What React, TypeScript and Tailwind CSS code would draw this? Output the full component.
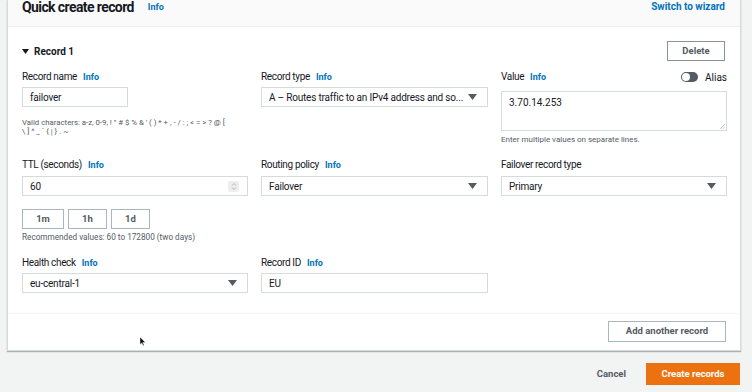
import React from "react";

const blue = "text-[#0073bb]";

function Info() {
  return <span className={`ml-[6px] text-[9px] font-bold tracking-normal ${blue}`}>Info</span>;
}

function Label({ text, info = true }: { text: string; info?: boolean }) {
  return (
    <div className="flex h-[14px] items-center text-[10px] leading-[14px] tracking-[-0.35px] text-[#16191f]">
      {text}
      {info && <Info />}
    </div>
  );
}

function Caret() {
  return (
    <svg width="9" height="6" viewBox="0 0 9 6" className="shrink-0">
      <path d="M0 0h9L4.5 6z" fill="#545b64" />
    </svg>
  );
}

function Input({ value, select, spinner }: { value: string; select?: boolean; spinner?: boolean }) {
  return (
    <div className="flex h-[20px] items-center justify-between border border-[#d5dbdb] bg-white pl-[7px] pr-[10px] text-[10px] tracking-[-0.2px] text-[#16191f]">
      <span className="whitespace-nowrap">{value}</span>
      {select && <Caret />}
      {spinner && (
        <div className="-mr-[2px] flex h-[11px] w-[11px] flex-col items-center justify-center rounded-[2px] bg-[#eeeeee]">
          <svg width="6" height="9" viewBox="0 0 6 9">
            <path d="M1 3.5L3 1.5L5 3.5M1 5.5L3 7.5L5 5.5" stroke="#9aa0a6" strokeWidth="0.8" fill="none" />
          </svg>
        </div>
      )}
    </div>
  );
}

function SmallButton({ text }: { text: string }) {
  return (
    <div className="flex h-[20px] items-center justify-center border border-[#aab7b8] bg-white text-[9.5px] font-bold text-[#545b64]">
      {text}
    </div>
  );
}

export default function App() {
  return (
    <div className="relative h-[392px] w-[752px] overflow-hidden bg-[#f2f3f3] font-['Roboto',sans-serif] text-[#16191f]">
      <div className="ml-[7px] w-[734px] border-x border-b border-[#d5dbdb] bg-white shadow-[0_1px_1px_rgba(0,28,36,0.3)]">
        <div className="flex h-[27px] items-start justify-between border-b border-[#eaeded] bg-[#fafafa] pl-[14px] pr-[15px]">
          <div className="flex items-center leading-[15px]">
            <span className="text-[14px] font-bold tracking-[-0.6px]">Quick create record</span>
            <span className={`ml-[14px] text-[9px] font-bold ${blue}`}>Info</span>
          </div>
          <span className={`text-[10px] font-bold leading-[13px] ${blue}`}>Switch to wizard</span>
        </div>

        <div className="pl-[14px] pr-[15px] pt-[14px]">
          <div className="flex h-[20px] items-center justify-between">
            <div className="flex items-center gap-[5px] text-[10px] font-bold">
              <svg width="7" height="5" viewBox="0 0 7 5">
                <path d="M0 0h7L3.5 5z" fill="#16191f" />
              </svg>
              Record 1
            </div>
            <div className="flex h-[20px] w-[58px] items-center justify-center border border-[#879596] text-[9.5px] font-bold text-[#545b64]">
              Delete
            </div>
          </div>

          <div className="mt-[9px] grid h-[88px] grid-cols-[226px_227px_226px] gap-x-[13px]">
            <div>
              <Label text="Record name" />
              <div className="mt-[3px] w-[106px]">
                <Input value="failover" />
              </div>
              <p className="mt-[11px] whitespace-nowrap text-[7.8px] leading-[9px] text-[#545b64]">
                Valid characters: a-z, 0-9, ! " # $ % &amp; ' ( ) * + , - / : ; &lt; = &gt; ? @ [
                <br />
                \ ] ^ _ ` {"{"} | {"}"} . ~
              </p>
            </div>
            <div>
              <Label text="Record type" />
              <div className="mt-[3px]">
                <Input value="A – Routes traffic to an IPv4 address and so..." select />
              </div>
            </div>
            <div>
              <div className="flex h-[14px] items-center justify-between">
                <Label text="Value" />
                <div className="flex items-center gap-[7px] text-[10px]">
                  <div className="flex h-[10px] w-[17px] items-center rounded-full bg-[#545b64] pl-[1px]">
                    <div className="h-[8px] w-[8px] rounded-full bg-white" />
                  </div>
                  Alias
                </div>
              </div>
              <div className="relative mt-[7px] h-[40px] border border-[#d5dbdb] pl-[7px] pt-[3px] text-[10px]">
                3.70.14.253
                <svg width="5" height="5" viewBox="0 0 5 5" className="absolute bottom-[1px] right-[1px]">
                  <path d="M5 0L0 5M5 2.5L2.5 5" stroke="#aab7b8" strokeWidth="0.7" />
                </svg>
              </div>
              <p className="mt-[4px] text-[8px] leading-[10px] text-[#545b64]">Enter multiple values on separate lines.</p>
            </div>
          </div>

          <div className="grid h-[98px] grid-cols-[226px_227px_226px] gap-x-[13px]">
            <div>
              <Label text="TTL (seconds)" />
              <div className="mt-[4px]">
                <Input value="60" spinner />
              </div>
              <div className="mt-[13px] flex gap-[4px]">
                <div className="w-[42px]"><SmallButton text="1m" /></div>
                <div className="w-[39px]"><SmallButton text="1h" /></div>
                <div className="w-[39px]"><SmallButton text="1d" /></div>
              </div>
              <p className="mt-[3px] text-[8.2px] leading-[10px] text-[#545b64]">Recommended values: 60 to 172800 (two days)</p>
            </div>
            <div>
              <Label text="Routing policy" />
              <div className="mt-[4px]">
                <Input value="Failover" select />
              </div>
            </div>
            <div>
              <Label text="Failover record type" info={false} />
              <div className="mt-[4px]">
                <Input value="Primary" select />
              </div>
            </div>
          </div>

          <div className="grid grid-cols-[226px_227px_226px] gap-x-[13px] pb-[20px]">
            <div>
              <Label text="Health check" />
              <div className="mt-[3px]">
                <Input value="eu-central-1" select />
              </div>
            </div>
            <div>
              <Label text="Record ID" />
              <div className="mt-[3px]">
                <Input value="EU" />
              </div>
            </div>
          </div>
        </div>

        <div className="flex justify-end border-t border-[#f2f3f3] pb-[8px] pr-[14px] pt-[7px]">
          <div className="flex h-[21px] w-[118px] items-center justify-center border border-[#aab7b8] text-[9.5px] font-bold text-[#545b64]">
            Add another record
          </div>
        </div>
      </div>

      <div className="mt-[12px] flex items-center justify-end gap-[20px] pr-[12px]">
        <span className="text-[9.5px] font-bold text-[#545b64]">Cancel</span>
        <div className="flex h-[22px] w-[94px] items-center justify-center bg-[#ec7211] text-[9.5px] font-bold text-white">
          Create records
        </div>
      </div>

      <svg width="6" height="9" viewBox="0 0 6 9" className="absolute left-[140px] top-[337px]">
        <path d="M0 0v7.5l1.8-1.6 1.3 2.8 1-0.5-1.3-2.7H5.4z" fill="#111" stroke="#fff" strokeWidth="0.4" />
      </svg>
    </div>
  );
}
